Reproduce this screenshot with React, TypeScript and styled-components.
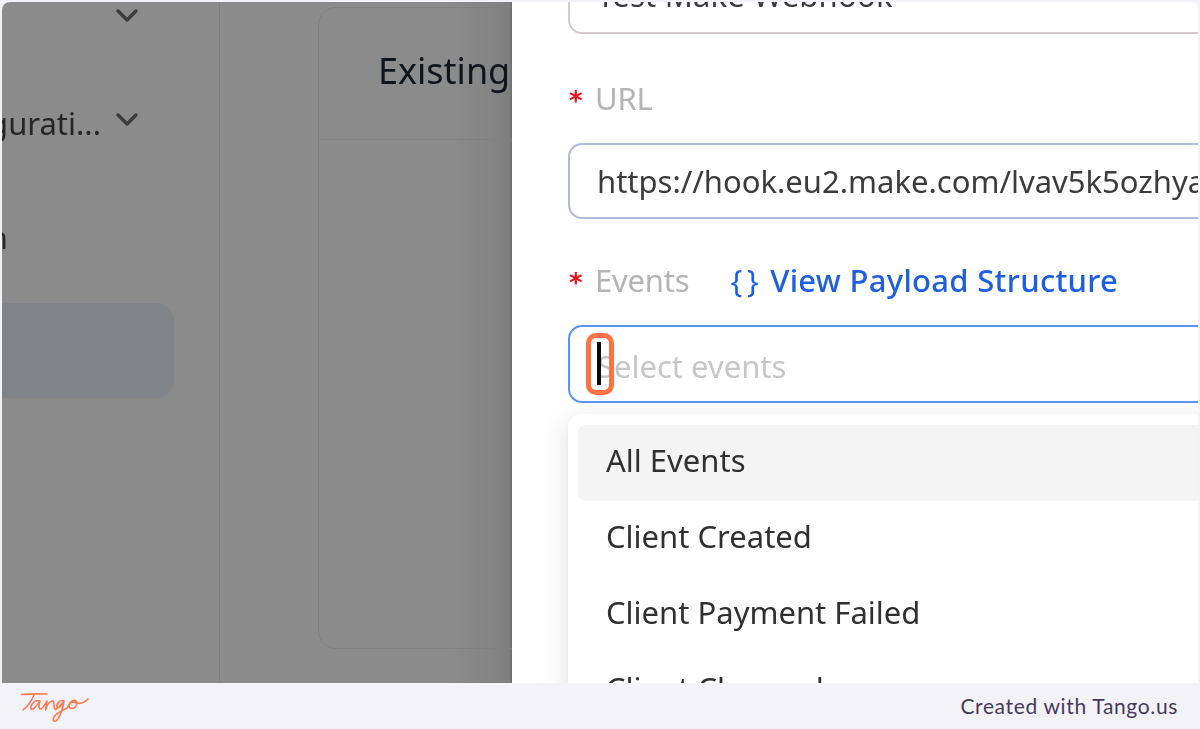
import React from "react";
import styled, { createGlobalStyle } from "styled-components";

const Global = createGlobalStyle`
  html, body { margin: 0; padding: 0; background: #f3f2f7; }
  body { width: 1200px; height: 729px; overflow: hidden; }
`;

const Frame = styled.div`
  width: 1200px;
  height: 729px;
  display: flex;
  flex-direction: column;
  background: #f3f2f7;
  font-family: "Noto Sans", "Open Sans", sans-serif;
`;

const Stage = styled.div`
  height: 681px;
  margin: 2px 2px 0;
  display: flex;
  overflow: hidden;
  border-radius: 8px 8px 0 0;
  background: #fff;
  filter: blur(0.45px);
`;

const Dimmed = styled.div`
  width: 510px;
  flex: none;
  display: flex;
  overflow: hidden;
  background: linear-gradient(90deg, #8b8b8b 88%, #808080 99.4%, #6e6e6e 100%);
`;

const Sidebar = styled.div`
  width: 217px;
  flex: none;
  border-right: 1px solid #808080;
  overflow: hidden;
`;

const SideRow = styled.div<{ $h: number; $pr: number }>`
  height: ${(p) => p.$h}px;
  display: flex;
  align-items: center;
  justify-content: flex-end;
  padding-right: ${(p) => p.$pr}px;
  white-space: nowrap;
  color: #262626;
  font-size: 31px;
`;

const Chevron = styled.svg`
  width: 24px;
  height: 16px;
  margin: 0 0 6px 14px;
  flex: none;
`;

const ActiveRow = styled.div`
  width: 172px;
  height: 95px;
  margin-top: 39px;
  border-radius: 0 18px 18px 0;
  background: #808488;
`;

const Main = styled.div`
  flex: 1;
  min-width: 0;
  padding: 5px 0 0 98px;
`;

const Card = styled.div`
  height: 642px;
  width: 260px;
  border: 1px solid #808080;
  border-radius: 18px;
  box-sizing: border-box;
`;

const CardHead = styled.div`
  height: 132px;
  padding: 0 0 6px 59px;
  box-sizing: border-box;
  border-bottom: 1px solid #808080;
  display: flex;
  align-items: center;
  color: #10141c;
  font-size: 36px;
  white-space: nowrap;
  overflow: hidden;
`;

const Drawer = styled.div`
  flex: 1;
  min-width: 0;
  padding-left: 56px;
  overflow: hidden;
`;

const Input = styled.div<{ $border: string; $h: number; $mt: number }>`
  height: ${(p) => p.$h}px;
  margin-top: ${(p) => p.$mt}px;
  margin-right: -20px;
  padding-left: 27px;
  display: flex;
  align-items: center;
  box-sizing: border-box;
  border: 2px solid ${(p) => p.$border};
  border-radius: 14px;
  background: #fff;
  white-space: nowrap;
  overflow: hidden;
  position: relative;
  font-size: 31px;
  color: #3b3b3b;
`;

const CutInput = styled(Input)`
  border-top: 0;
  border-radius: 0 0 14px 14px;
  align-items: flex-end;
  padding-bottom: 16px;
  letter-spacing: 0.2px;
`;

const SelectInput = styled(Input)`
  padding-top: 4px;
`;

const Label = styled.div<{ $mt: number }>`
  height: 40px;
  margin-top: ${(p) => p.$mt}px;
  display: flex;
  align-items: center;
  font-size: 31px;
  letter-spacing: -0.2px;
  color: #b4b4b4;
  white-space: nowrap;
`;

const Star = styled.span`
  color: #f5101d;
  font-family: "DejaVu Sans", sans-serif;
  font-size: 26px;
  font-weight: 700;
  width: 26px;
  margin: 6px 0 0 1px;
  flex: none;
`;

const PayloadLink = styled.span`
  margin-left: 41px;
  display: flex;
  gap: 13px;
  color: #1d5fe0;
  font-weight: 500;
  letter-spacing: 0.3px;
`;

const Braces = styled.span`
  font-weight: 400;
  letter-spacing: -1.6px;
`;

const Placeholder = styled.span`
  color: #c6c6c6;
`;

const Caret = styled.span`
  position: absolute;
  left: 27px;
  top: 15px;
  width: 4px;
  height: 43px;
  background: #0a0a0a;
`;

const Highlight = styled.span`
  position: absolute;
  left: 16px;
  top: 6px;
  width: 28px;
  height: 62px;
  border: 5.5px solid #ff7043;
  border-radius: 10px;
  box-sizing: border-box;
`;

const Dropdown = styled.div`
  margin-top: 11px;
  margin-right: -20px;
  padding: 11px 10px;
  border-radius: 14px 0 0 0;
  box-shadow: 0 6px 16px 0 rgba(0, 0, 0, 0.08), 0 3px 6px -4px rgba(0, 0, 0, 0.12), 0 9px 28px 8px rgba(0, 0, 0, 0.05);
  background: #fff;
`;

const Option = styled.div<{ $active?: boolean }>`
  height: 76px;
  box-sizing: border-box;
  padding: 0 0 7px 28px;
  display: flex;
  align-items: center;
  border-radius: 8px;
  background: ${(p) => (p.$active ? "#f4f4f4" : "transparent")};
  font-size: 31px;
  color: #303030;
  white-space: nowrap;
`;

const Footer = styled.div`
  flex: 1;
  display: flex;
  align-items: center;
  justify-content: space-between;
  padding: 0 22px 0 20px;
  border-radius: 0 0 10px 10px;
  background: #f3f2f7;
`;

const Credit = styled.span`
  font-family: Lato, sans-serif;
  font-size: 21px;
  letter-spacing: 0.65px;
  margin-bottom: 2px;
  color: #453a5c;
`;

const Logo = styled.svg`
  width: 70px;
  height: 34px;
  flex: none;
`;

const ChevronIcon = () => (
  <Chevron viewBox="0 0 24 16" fill="none" stroke="#3c3c3c" strokeWidth="3.4" strokeLinecap="round" strokeLinejoin="round">
    <path d="M3 3 L12 12 L21 3" />
  </Chevron>
);

export default function App() {
  return (
    <Frame>
      <Global />
      <Stage>
        <Dimmed>
          <Sidebar>
            <SideRow $h={34} $pr={80}>
              <ChevronIcon />
            </SideRow>
            <SideRow $h={174} $pr={80}>
              gurati...
              <ChevronIcon />
            </SideRow>
            <SideRow $h={54} $pr={211}>
              <span>n</span>
            </SideRow>
            <ActiveRow />
          </Sidebar>
          <Main>
            <Card>
              <CardHead>Existing</CardHead>
            </Card>
          </Main>
        </Dimmed>
        <Drawer>
          <CutInput $border="#d3cbcb" $h={32} $mt={0}>Test Make Webhook</CutInput>
          <Label $mt={44}><Star>*</Star>URL</Label>
          <Input $border="#aebbd8" $h={76} $mt={25}>https://hook.eu2.make.com/lvav5k5ozhya</Input>
          <Label $mt={41}>
            <Star>*</Star>Events
            <PayloadLink>
              <Braces>{"{ }"}</Braces>
              View Payload Structure
            </PayloadLink>
          </Label>
          <SelectInput $border="#5b93f2" $h={78} $mt={25}>
            <Placeholder>Select events</Placeholder>
            <Caret />
            <Highlight />
          </SelectInput>
          <Dropdown>
            <Option $active>All Events</Option>
            <Option>Client Created</Option>
            <Option>Client Payment Failed</Option>
            <Option>Client Churned</Option>
          </Dropdown>
        </Drawer>
      </Stage>
      <Footer>
        <Logo viewBox="0 0 70 34" fill="none" stroke="#ff7a52" strokeWidth="1.6" strokeLinecap="round" strokeLinejoin="round">
          <path d="M1.5 5.5 C9 4.8 18 4.8 27 5" />
          <path d="M14 6 C12 11 8 17 3 21" />
          <path d="M20 12 C15 10 10 16 11 20 C13 22 17 16 20 12 C19 15 18 20 21 20 C23 19 25 15 27 12 C26.5 15 26 18 25.5 21 C27 16 30 12 33 12 C35 13 33 19 35.5 20.5 C38 20 41 15 44 12 C40 10 36 15 37 18 C39 20 42 16 44 12 C43 18 41 25 38 30 C35 34 32 32 34 28 C37 23 42 22 47 19 C49 17 49 13 52 12 C56 10 58 13 56 17 C53 21 49 20 49 16 C50 13 54 13 57 14 C61 15 65 13 68 10" />
        </Logo>
        <Credit>Created with Tango.us</Credit>
      </Footer>
    </Frame>
  );
}
